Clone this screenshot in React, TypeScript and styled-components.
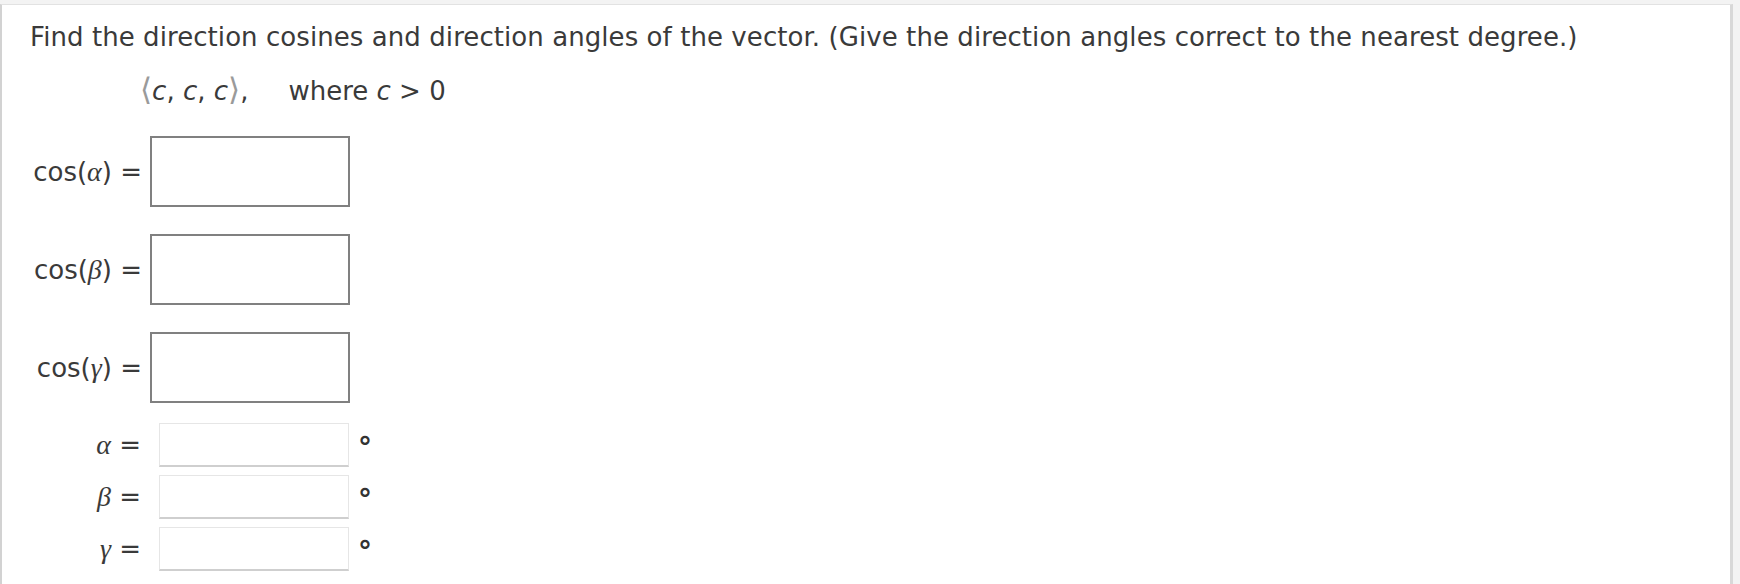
import React from "react";
import styled, { createGlobalStyle } from "styled-components";

const GlobalStyle = createGlobalStyle`
  body {
    margin: 0;
    background: #f3f3f3;
    font-family: "DejaVu Sans", Verdana, sans-serif;
    color: #3a3a3a;
  }
`;

const cosRows = [
  { name: "α" },
  { name: "β" },
  { name: "γ" },
];

const App = () => {
  return (
    <>
      <GlobalStyle />
      <Panel>
        <Title>
          Find the direction cosines and direction angles of the vector. (Give
          the direction angles correct to the nearest degree.)
        </Title>
        <Vector>
          <Bracket>⟨</Bracket>
          <Var>c</Var>, <Var>c</Var>, <Var>c</Var>
          <Bracket>⟩</Bracket>,
          <Where>
            where <Var>c</Var> &gt; 0
          </Where>
        </Vector>
        <CosList>
          {cosRows.map((r) => (
            <CosRow key={r.name}>
              <CosLabel>
                cos(<Greek>{r.name}</Greek>) =
              </CosLabel>
              <BigBox />
            </CosRow>
          ))}
        </CosList>
        <AngleList>
          {cosRows.map((r) => (
            <AngleRow key={r.name}>
              <AngleLabel>
                <Greek>{r.name}</Greek> =
              </AngleLabel>
              <SmallBox />
              <Degree>°</Degree>
            </AngleRow>
          ))}
        </AngleList>
      </Panel>
    </>
  );
};

export default App;

const Panel = styled.div`
  margin-top: 4px;
  width: 1733px;
  height: 580px;
  box-sizing: border-box;
  background: #fff;
  border-top: 1px solid #e2e2e2;
  border-left: 2px solid #d2d2d2;
  border-right: 3px solid #d8d8d8;
  overflow: hidden;
`;

const Title = styled.div`
  margin: 17px 0 0 28px;
  font-size: 26px;
  letter-spacing: 0.07px;
  line-height: 30px;
  white-space: nowrap;
`;

const Vector = styled.div`
  margin: 22px 0 0 138px;
  height: 30px;
  font-size: 26px;
  line-height: 30px;
  display: flex;
  align-items: baseline;
  white-space: pre;
`;

const Var = styled.span`
  font-style: italic;
`;

const Bracket = styled.span`
  font-family: "DejaVu Serif", serif;
  color: #9a9a9a;
  font-size: 31px;
`;

const Where = styled.span`
  margin-left: 40px;
`;

const Greek = styled.span`
  font-family: "Liberation Serif", "DejaVu Serif", serif;
  font-style: italic;
  font-size: 28px;
`;

const CosList = styled.div`
  margin-top: 32px;
  display: flex;
  flex-direction: column;
  gap: 27px;
`;

const CosRow = styled.div`
  display: flex;
  align-items: center;
`;

const CosLabel = styled.div`
  padding-right: 8px;
  box-sizing: border-box;
  width: 148px;
  text-align: right;
  font-size: 26px;
  white-space: nowrap;
`;

const BigBox = styled.div`
  width: 200px;
  height: 71px;
  box-sizing: border-box;
  border: 2px solid #808080;
  background: #fff;
`;

const AngleList = styled.div`
  margin-top: 20px;
  display: flex;
  flex-direction: column;
  gap: 8px;
`;

const AngleRow = styled.div`
  display: flex;
  align-items: center;
`;

const AngleLabel = styled.div`
  width: 157px;
  padding-right: 18px;
  box-sizing: border-box;
  text-align: right;
  font-size: 26px;
  white-space: nowrap;
`;

const SmallBox = styled.div`
  width: 190px;
  height: 44px;
  box-sizing: border-box;
  border: 1px solid #e6e6e6;
  border-bottom: 2px solid #cfcfcf;
  background: #fff;
`;

const Degree = styled.span`
  align-self: flex-start;
  margin: 13px 0 0 9px;
  font-size: 28px;
  font-weight: bold;
  line-height: 24px;
  color: #333;
`;
